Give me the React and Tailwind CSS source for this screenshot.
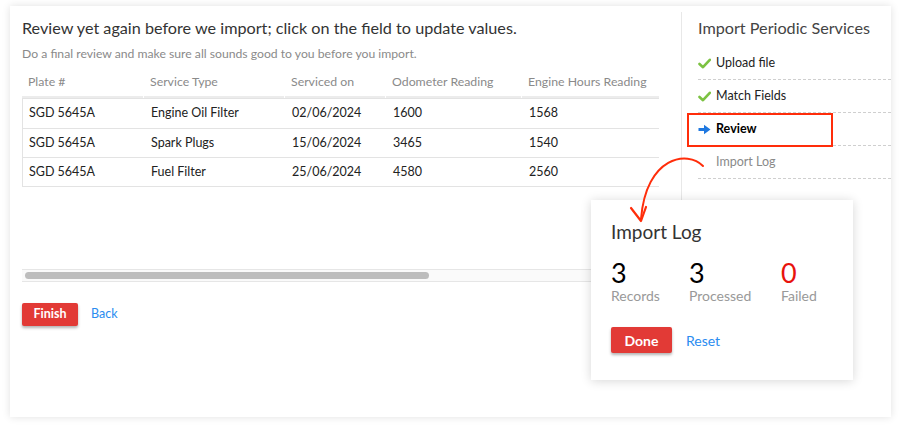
import React from "react";

const rows = [
  ["SGD 5645A", "Engine Oil Filter", "02/06/2024", "1600", "1568"],
  ["SGD 5645A", "Spark Plugs", "15/06/2024", "3465", "1540"],
  ["SGD 5645A", "Fuel Filter", "25/06/2024", "4580", "2560"],
];

const cols = [
  { label: "Plate #", w: "w-[121px]" },
  { label: "Service Type", w: "w-[140px]" },
  { label: "Serviced on", w: "w-[100px]" },
  { label: "Odometer Reading", w: "w-[135px]" },
  { label: "Engine Hours Reading", w: "w-[160px]" },
];

function Check() {
  return (
    <svg className="w-[13px] h-[11px]" viewBox="0 0 13 11">
      <path d="M1.5 6 L5 9.2 L11.8 1.8" fill="none" stroke="#7cc242" strokeWidth="2.6" strokeLinecap="round" strokeLinejoin="round" />
    </svg>
  );
}

function Arrow() {
  return (
    <svg className="w-[13px] h-[11px]" viewBox="0 0 13 11">
      <path d="M0.5 4 H6 V0.8 L12.5 5.5 L6 10.2 V7 H0.5 Z" fill="#1f78e0" />
    </svg>
  );
}

export default function App() {
  return (
    <div className="relative w-[900px] h-[430px] bg-white font-['Lato',sans-serif] overflow-hidden">
      <div className="absolute left-[10px] top-[6px] w-[881px] h-[411px] bg-white shadow-[0_0_8px_rgba(0,0,0,0.12)] flex">
        {/* main */}
        <div className="w-[671px] pl-[12px] pt-[12px]">
          <h1 className="text-[16.2px] leading-[20px] text-[#333]">
            Review yet again before we import; click on the field to update values.
          </h1>
          <p className="mt-[8px] text-[12.2px] leading-[16px] text-[#8a8a8a]">
            Do a final review and make sure all sounds good to you before you import.
          </p>
          <div className="mt-[7px] w-[637px] overflow-hidden">
            <div className="flex w-[700px]">
              {cols.map((c) => (
                <div key={c.label} className={`${c.w} mr-[1px] h-[29px] flex items-center pl-[6px] text-[12.3px] text-[#8a8a8a] border-b-2 border-[#ececec]`}>
                  {c.label}
                </div>
              ))}
            </div>
            <div className="border border-[#e3e3e3] border-r-0 w-[700px]">
              {rows.map((r, i) => (
                <div key={i} className={`flex h-[29px] items-center text-[12.5px] text-[#222] ${i > 0 ? "border-t border-[#e3e3e3]" : ""}`}>
                  {r.map((v, j) => (
                    <div key={j} className={`${cols[j].w} mr-[1px] pl-[6px]`}>
                      {v}
                    </div>
                  ))}
                </div>
              ))}
            </div>
          </div>
          <div className="mt-[82px] w-[659px] h-[13px] bg-[#fafafa] border-y border-[#e6e6e6] flex items-center px-[3px]">
            <div className="w-[404px] h-[7px] rounded-full bg-[#bdbdbd]" />
          </div>
          <div className="mt-[21px] flex items-center gap-[13px]">
            <button className="w-[56px] h-[23px] rounded-[2px] bg-[#e23a36] text-white font-bold text-[12.5px] shadow-[0_2px_3px_rgba(0,0,0,0.3)]">
              Finish
            </button>
            <a className="text-[12.5px] text-[#2a8cf0]">Back</a>
          </div>
        </div>
        {/* sidebar */}
        <div className="relative w-[210px] self-start h-[330px] mt-[6px] border-l border-[#e8e8e8] pl-[16px] pt-[5px]">
          <h2 className="text-[16.2px] leading-[22px] text-[#444]">Import Periodic Services</h2>
          <ul className="mt-[8px] text-[12.5px]">
            <li className="h-[33px] flex items-center gap-[5px] border-b border-dashed border-[#cfcfcf] text-[#222]">
              <Check />
              Upload file
            </li>
            <li className="h-[33px] flex items-center gap-[5px] border-b border-dashed border-[#cfcfcf] text-[#222]">
              <Check />
              Match Fields
            </li>
            <li className="h-[33px] flex items-center gap-[5px] border-b border-dashed border-[#cfcfcf] text-black font-bold">
              <Arrow />
              Review
            </li>
            <li className="h-[33px] flex items-center pl-[18px] border-b border-dashed border-[#cfcfcf] text-[#8a8a8a]">
              Import Log
            </li>
          </ul>
          <div className="absolute left-[5px] top-[101px] w-[146px] h-[34px] border-2 border-[#ff2d0a]" />
        </div>
      </div>

      {/* popup */}
      <div className="absolute left-[591px] top-[200px] w-[262px] h-[180px] bg-white shadow-[0_1px_10px_rgba(0,0,0,0.16)] pl-[20px] pt-[20px]">
        <div className="text-[19px] leading-[24px] text-[#333]">Import Log</div>
        <div className="mt-[14px] flex">
          <div className="w-[78px]">
            <div className="text-[27px] leading-[29px] text-black">3</div>
            <div className="text-[14px] leading-[18px] text-[#999]">Records</div>
          </div>
          <div className="w-[92px]">
            <div className="text-[27px] leading-[29px] text-black">3</div>
            <div className="text-[14px] leading-[18px] text-[#999]">Processed</div>
          </div>
          <div>
            <div className="text-[27px] leading-[29px] text-[#e8130c]">0</div>
            <div className="text-[14px] leading-[18px] text-[#999]">Failed</div>
          </div>
        </div>
        <div className="mt-[22px] flex items-center gap-[14px]">
          <button className="w-[61px] h-[26px] rounded-[2px] bg-[#e23a36] text-white font-bold text-[14px] shadow-[0_2px_3px_rgba(0,0,0,0.3)]">
            Done
          </button>
          <a className="text-[14px] text-[#2a8cf0]">Reset</a>
        </div>
      </div>

      {/* annotation arrow */}
      <svg className="absolute left-0 top-0 pointer-events-none" width="900" height="430">
        <path d="M703 166 C688 150 646 156 641 219" fill="none" stroke="#ff2d0a" strokeWidth="2" strokeLinecap="round" />
        <path d="M631 208 L641 221 L646 207" fill="none" stroke="#ff2d0a" strokeWidth="2.2" strokeLinecap="round" strokeLinejoin="round" />
      </svg>
    </div>
  );
}
